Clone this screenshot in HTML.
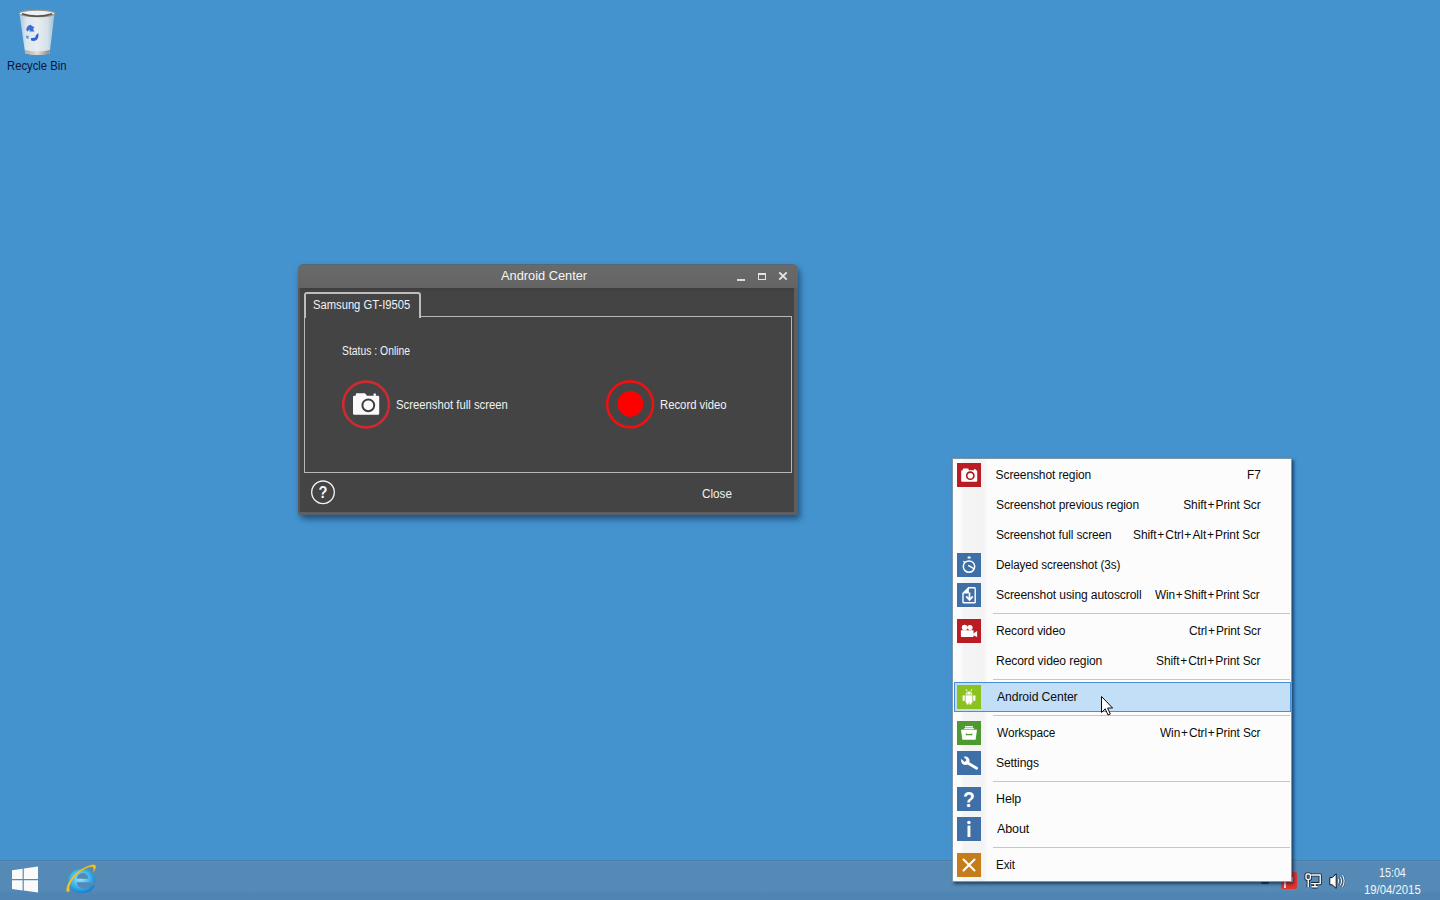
<!DOCTYPE html>
<html><head><meta charset="utf-8">
<style>
*{margin:0;padding:0;box-sizing:border-box}
html,body{width:1440px;height:900px;overflow:hidden}
body{background:#4493cf;font-family:"Liberation Sans",sans-serif;position:relative}
.abs{position:absolute}
.t{position:absolute;white-space:nowrap;line-height:1;transform-origin:0 0}
.mt{position:absolute;white-space:nowrap;line-height:1;transform-origin:0 0;font-size:12px;letter-spacing:-0.11px;color:#0c0c0c}
.pl{margin:0 1.2px 0 0.8px}
</style></head><body>

<!-- recycle bin -->
<svg class="abs" style="left:14px;top:4px" width="48" height="54" viewBox="0 0 48 54">
<defs>
<linearGradient id="rb" x1="0" x2="1"><stop offset="0" stop-color="#a8c6dc"/><stop offset=".2" stop-color="#dbe6ee"/><stop offset=".5" stop-color="#e8eef2"/><stop offset=".8" stop-color="#d4e0e8"/><stop offset="1" stop-color="#9fbdd3"/></linearGradient>
<linearGradient id="rbb" x1="0" x2="1"><stop offset="0" stop-color="#b9a99a"/><stop offset=".5" stop-color="#e6ddd3"/><stop offset="1" stop-color="#8d8277"/></linearGradient>
</defs>
<path d="M5.4 9 L40.6 9 L35.6 49.5 Q23 52 11.2 49.5 Z" fill="url(#rb)"/>
<path d="M11 46 Q23 49 35.8 46 L35.4 49.6 Q23 52.4 11.4 49.6 Z" fill="url(#rbb)"/>
<ellipse cx="23" cy="9.4" rx="17.8" ry="3.2" fill="#eef2f4" stroke="#9c958e" stroke-width="1.1"/>
<path d="M8 9.6 Q23 14 38 9.6" fill="none" stroke="#6f6a66" stroke-width="1.2"/>
<path d="M12.2 25.8 Q12.6 22 16.2 20.8 L20.6 23.4 L19 24.8 L20.4 27.4 L15.4 27.6 L16 26 Q14.2 25.6 13.4 27.8 Z" fill="#3a6fd8"/>
<path d="M16.8 34.2 L21.4 33.4 L21.8 31.2 L24.4 29 Q25 33.6 22.6 36 Q19.8 37.8 17.2 36.6 Z" fill="#2c62d4"/>
<path d="M12 31.6 L14.6 32 L14.4 35 L12.6 34.2 Z" fill="#5a8ad8"/>
<path d="M8 10 Q23 15 38.4 10" fill="none" stroke="#3d3a38" stroke-width="1.2" opacity=".7"/>
</svg>
<div class="t" style="left:7.30px;top:59.64px;font-size:12px;color:#0b1538;transform:scaleX(0.9407);">Recycle Bin</div>

<!-- taskbar -->
<div class="abs" style="left:0;top:860px;width:1440px;height:40px;background:linear-gradient(#5a8dba 0px,#5589b6 4px,#5589b6 30px,#5084b2 34px,#5084b2 40px)"></div>
<div class="abs" style="left:0;top:860px;width:1440px;height:1px;background:#4b7eab"></div>
<!-- start -->
<svg class="abs" style="left:11px;top:866px" width="28" height="28" viewBox="0 0 28 28">
<path d="M1 4.3 L11.6 2.8 V13 H1 Z M12.8 2.6 L27 0.6 V13 H12.8 Z M1 14.2 H11.6 V24.4 L1 22.9 Z M12.8 14.2 H27 V26.6 L12.8 24.6 Z" fill="#fafafa"/>
</svg>
<!-- IE -->
<svg class="abs" style="left:64px;top:862px" width="34" height="34" viewBox="0 0 34 34">
<defs><radialGradient id="ieb" cx=".45" cy=".4" r=".6"><stop offset="0" stop-color="#9fe6ff"/><stop offset=".6" stop-color="#3cb4ea"/><stop offset="1" stop-color="#1c7fc9"/></radialGradient></defs>
<path d="M5.5 19.5 C5.5 12 10.5 7 17 7 C23.5 7 27.5 11.5 27.5 18.5 V20 H12.5 C13 24 15.5 26 18.5 26 C21 26 22.8 24.8 23.6 23 H27.2 C26 27.5 22.5 30.5 17.5 30.5 C10 30.5 5.5 26 5.5 19.5 Z M12.6 16.6 H21.8 C21.5 13.2 19.8 11.2 17.2 11.2 C14.6 11.2 13 13.2 12.6 16.6 Z" fill="url(#ieb)" transform="translate(4,-0.6) scale(1.24,1.04) translate(-5.5,0)"/>
<path d="M3 30 C1 26 6 15 15 9 C23 3.5 30 1.5 31.5 3.5 C32.5 5 31 8 29 10.5 C30 7.5 30 5.5 28.8 5 C26 4 20 7 15 11 C7.5 17 3.8 25 5.8 28.8 C4.8 29.4 3.8 30.2 3 30 Z" fill="#f3c726" stroke="#d9a514" stroke-width=".4"/>
</svg>
<!-- tray hidden icon -->
<div class="abs" style="left:1261px;top:881px;width:8px;height:3px;background:#1d3f66;border-radius:1px"></div>
<!-- tray red icon -->
<div class="abs" style="left:1281px;top:872px;width:16px;height:17px;background:#e2342c;border-radius:2px"></div>
<svg class="abs" style="left:1281px;top:872px" width="16" height="17" viewBox="0 0 16 17"><path d="M4 16 V9 H11 V5" fill="none" stroke="#fff" stroke-width="1.6"/></svg>
<!-- network -->
<svg class="abs" style="left:1303px;top:871px" width="20" height="19" viewBox="0 0 20 19">
<g fill="none" stroke="#10161c" stroke-width="3.2" stroke-linejoin="round" opacity=".85">
<rect x="3" y="3" width="4.4" height="5.4" rx="1.4"/>
<path d="M5.2 8.6 V16.2"/>
<path d="M8.2 4 H17.2 V12.6 H8.2"/>
<path d="M12 12.6 V15.4 M8.6 15.8 H14.6"/>
</g>
<g fill="none" stroke="#ffffff" stroke-width="1.4" stroke-linejoin="round">
<rect x="3" y="3" width="4.4" height="5.4" rx="1.4"/>
<path d="M5.2 8.6 V16.2"/>
<path d="M8.2 4 H17.2 V12.6 H8.2"/>
<path d="M12 12.6 V15.4 M8.6 15.8 H14.6"/>
</g>
</svg>
<!-- volume -->
<svg class="abs" style="left:1327px;top:871px" width="20" height="20" viewBox="0 0 20 20">
<path d="M2.8 6.6 H5.2 L9.2 2.8 V17.4 L5.2 13.8 H2.8 Z" fill="#fff" stroke="#10161c" stroke-width="1" stroke-linejoin="round"/>
<path d="M11.2 8 Q12.4 10 11.2 12 M13.4 6 Q15.6 10 13.4 14 M15.4 4 Q18.8 10 15.4 16" fill="none" stroke="#10161c" stroke-width="2.4" opacity=".5"/>
<path d="M11.2 8 Q12.4 10 11.2 12 M13.4 6 Q15.6 10 13.4 14 M15.4 4 Q18.8 10 15.4 16" fill="none" stroke="#f4f8ff" stroke-width="1.1"/>
</svg>
<div class="t" style="left:1379.40px;top:866.84px;font-size:12px;color:#f4f6f8;transform:scaleX(0.8924);">15:04</div><div class="t" style="left:1363.50px;top:883.74px;font-size:12px;color:#f4f6f8;transform:scaleX(0.9441);">19/04/2015</div>

<!-- dialog -->
<div class="abs" style="left:298px;top:264px;width:500px;height:251px;border-radius:6px 6px 0 5px;box-shadow:2px 4px 6px rgba(15,45,80,.65);background:linear-gradient(90deg,#575757,#5e5e5e 2%,#5e5e5e)"></div>
<div class="abs" style="left:298px;top:512px;width:500px;height:3px;border-radius:0 0 0 5px;background:#5c6066"></div>
<div class="abs" style="left:298px;top:264px;width:500px;height:24px;border-radius:6px 6px 0 0;background:linear-gradient(#6a6a6a,#646464)"></div>
<div class="abs" style="left:300px;top:288px;width:494px;height:224px;background:linear-gradient(#3d3d3d,#434343 3px,#444444 6px)"></div>
<div class="abs" style="left:303px;top:264px;width:490px;height:1px;background:rgba(70,100,130,.55)"></div>
<!-- title buttons -->
<div class="abs" style="left:737px;top:279px;width:8px;height:2px;background:#dadada"></div>
<div class="abs" style="left:758px;top:273px;width:8px;height:7px;border:1px solid #e4e4e4;border-top-width:2px"></div>
<svg class="abs" style="left:778px;top:271px" width="10" height="10" viewBox="0 0 10 10"><path d="M1.3 1.3 L8.7 8.7 M8.7 1.3 L1.3 8.7" stroke="#e4e4e4" stroke-width="1.9"/></svg>
<!-- tab page -->
<div class="abs" style="left:304px;top:316px;width:488px;height:157px;border:1px solid #b8b8b8"></div>
<div class="abs" style="left:304px;top:292px;width:117px;height:26px;border:2px solid #bdbdbd;border-bottom:none;border-radius:3px 3px 0 0;background:#444"></div>
<div class="t" style="left:501.40px;top:268.60px;font-size:13px;color:#f6f6f6;transform:scaleX(0.9847);">Android Center</div>
<div class="t" style="left:313.40px;top:298.59px;font-size:12px;color:#f2f2f2;transform:scaleX(0.9341);">Samsung GT-I9505</div>
<div class="t" style="left:341.80px;top:344.84px;font-size:12px;color:#f2f2f2;transform:scaleX(0.8652);">Status : Online</div>
<div class="t" style="left:395.60px;top:398.84px;font-size:12px;color:#f2f2f2;transform:scaleX(0.9416);">Screenshot full screen</div>
<div class="t" style="left:660.10px;top:398.84px;font-size:12px;color:#f2f2f2;transform:scaleX(0.9419);">Record video</div>
<div class="t" style="left:701.60px;top:487.84px;font-size:12px;color:#f2f2f2;transform:scaleX(0.9746);">Close</div>
<!-- camera -->
<svg class="abs" style="left:340px;top:380px" width="52" height="50" viewBox="0 0 52 50">
<circle cx="26.1" cy="24.5" r="22.9" fill="none" stroke="#d02a30" stroke-width="2.6"/>
<path d="M13 17 Q13 15.8 14.2 15.8 H15.6 L16.2 13.3 H25 L27 15.8 H33.6 V13.6 H35.8 V15.8 H38 Q39.2 15.8 39.2 17 V33.5 Q39.2 34.7 38 34.7 H14.2 Q13 34.7 13 33.5 Z" fill="#fafafa"/>
<circle cx="28.3" cy="25.3" r="5.9" fill="none" stroke="#3e3e3e" stroke-width="2"/>
</svg>
<!-- record -->
<svg class="abs" style="left:604px;top:380px" width="52" height="50" viewBox="0 0 52 50">
<circle cx="26.1" cy="24.3" r="22.9" fill="none" stroke="#f01010" stroke-width="2.6"/>
<circle cx="26.3" cy="23.9" r="13" fill="#ff0000"/>
</svg>
<!-- help -->
<svg class="abs" style="left:310px;top:479px" width="26" height="26" viewBox="0 0 26 26">
<circle cx="13" cy="13.3" r="11.3" fill="none" stroke="#f2f2f2" stroke-width="1.3"/>
<text x="13" y="19.3" text-anchor="middle" font-family="Liberation Sans" font-weight="bold" font-size="17" fill="#f4f4f4" transform="translate(13,0) scale(.86,1) translate(-13,0)">?</text>
</svg>

<!-- context menu -->
<div class="abs" style="left:952px;top:458px;width:340px;height:424px;background:#fcfcfc;border:1px solid #7f97ab;box-shadow:2px 2px 3px rgba(0,20,50,.6)"></div>
<div class="abs" style="left:953px;top:459px;width:36px;height:422px;background:linear-gradient(90deg,#fdfdfd 0px,#fcfcfc 7px,#f4f4f4 11px,#f3f3f3 30px,#f6f6f6 32px,#fdfdfd 35px)"></div>
<svg class="abs" style="left:957px;top:463px" width="24" height="24" viewBox="0 0 24 24"><rect width="24" height="24" fill="#b91c23"/><path d="M4.2 8.2 Q4.2 7.2 5.2 7.2 H5.6 L6.2 5.4 H11.2 L12 7.2 H17.2 V6 H18.6 V7.2 H19.2 Q20.2 7.2 20.2 8.2 V17.8 Q20.2 18.8 19.2 18.8 H5.2 Q4.2 18.8 4.2 17.8 Z" fill="#fff"/><circle cx="13.3" cy="12.7" r="3.6" fill="none" stroke="#a8141b" stroke-width="1.6"/></svg>
<div class="mt" style="left:995.60px;top:468.84px;transform:scaleX(1.0000)">Screenshot region</div>
<div class="mt" style="left:1247.31px;top:468.84px;transform:scaleX(0.9917)">F7</div>
<div class="mt" style="left:995.60px;top:498.84px;transform:scaleX(0.9979)">Screenshot previous region</div>
<div class="mt" style="left:1183.20px;top:498.84px;transform:scaleX(1.0000)">Shift<span class="pl">+</span>Print Scr</div>
<div class="mt" style="left:995.61px;top:528.84px;transform:scaleX(0.9939)">Screenshot full screen</div>
<div class="mt" style="left:1133.30px;top:528.84px;transform:scaleX(0.9992)">Shift<span class="pl">+</span>Ctrl<span class="pl">+</span>Alt<span class="pl">+</span>Print Scr</div>
<svg class="abs" style="left:957px;top:553px" width="24" height="24" viewBox="0 0 24 24"><rect width="24" height="24" fill="#3f6fa7"/><circle cx="12" cy="13.6" r="5.7" fill="none" stroke="#fff" stroke-width="1.5"/><rect x="10.6" y="3.5" width="3" height="2" rx=".6" fill="#fff"/><path d="M6.4 8.2 L8 9.6" stroke="#fff" stroke-width="1.5"/><path d="M11.7 12.6 L16.8 15.6" stroke="#fff" stroke-width="1.4" stroke-linecap="round"/></svg>
<div class="mt" style="left:995.63px;top:558.84px;transform:scaleX(0.9738)">Delayed screenshot (3s)</div>
<svg class="abs" style="left:957px;top:583px" width="24" height="24" viewBox="0 0 24 24"><rect width="24" height="24" fill="#3f6fa7"/><path d="M11.6 4.8 H17.4 Q18.2 4.8 18.2 5.6 V19 Q18.2 19.8 17.4 19.8 H6.8 Q6 19.8 6 19 V10.2 Z" fill="none" stroke="#fff" stroke-width="1.4" stroke-linejoin="round"/><path d="M5.6 10.4 L11.9 4.1 V10.4 Z" fill="#fff"/><path d="M12.5 9.6 V16.8 M9.2 13.4 L12.5 16.9 L15.8 13.4" fill="none" stroke="#fff" stroke-width="1.7"/></svg>
<div class="mt" style="left:995.59px;top:588.84px;transform:scaleX(1.0070)">Screenshot using autoscroll</div>
<div class="mt" style="left:1155.20px;top:588.84px;transform:scaleX(0.9813)">Win<span class="pl">+</span>Shift<span class="pl">+</span>Print Scr</div>
<div class="abs" style="left:993px;top:613px;width:297px;height:1px;background:#c6c6c6"></div>
<svg class="abs" style="left:957px;top:619px" width="24" height="24" viewBox="0 0 24 24"><rect width="24" height="24" fill="#b91c23"/><circle cx="7.6" cy="8.6" r="2.8" fill="#fff"/><circle cx="12.9" cy="8.6" r="2.7" fill="#fff"/><rect x="3.9" y="11.2" width="12.6" height="6.8" rx=".4" fill="#fff"/><path d="M16.2 14.6 L20.1 12 V18 L16.2 16.2 Z" fill="#fff"/><path d="M10.3 11.3 L11.1 10 L11.9 11.3 Z" fill="#b91c23"/></svg>
<div class="mt" style="left:995.60px;top:624.84px;transform:scaleX(0.9985)">Record video</div>
<div class="mt" style="left:1188.50px;top:624.84px;transform:scaleX(0.9958)">Ctrl<span class="pl">+</span>Print Scr</div>
<div class="mt" style="left:995.59px;top:654.84px;transform:scaleX(1.0087)">Record video region</div>
<div class="mt" style="left:1156.40px;top:654.84px;transform:scaleX(0.9981)">Shift<span class="pl">+</span>Ctrl<span class="pl">+</span>Print Scr</div>
<div class="abs" style="left:993px;top:679px;width:297px;height:1px;background:#c6c6c6"></div>
<div class="abs" style="left:954px;top:682px;width:337px;height:30px;background:#c3dff8;border:1px solid #4a8fd6"></div>
<svg class="abs" style="left:957px;top:685px" width="24" height="24" viewBox="0 0 24 24"><rect width="24" height="24" fill="#8cc220"/><path d="M8.6 9.6 Q8.8 6.6 12 6.4 Q15.2 6.6 15.4 9.6 Z" fill="#fff"/><path d="M9 4.2 L10.2 6.3 M15 4.2 L13.8 6.3" stroke="#fff" stroke-width=".9"/><circle cx="10.5" cy="8.1" r=".6" fill="#8cc220"/><circle cx="13.5" cy="8.1" r=".6" fill="#8cc220"/><rect x="8.6" y="10.3" width="6.8" height="7.3" fill="#fff"/><rect x="5.6" y="10.3" width="2.2" height="5.8" rx="1" fill="#fff"/><rect x="16.2" y="10.3" width="2.2" height="5.8" rx="1" fill="#fff"/><rect x="9.6" y="16" width="2" height="3.6" rx=".9" fill="#fff"/><rect x="12.4" y="16" width="2" height="3.6" rx=".9" fill="#fff"/></svg>
<div class="mt" style="left:996.60px;top:690.84px;transform:scaleX(1.0177)">Android Center</div>
<div class="abs" style="left:993px;top:715px;width:297px;height:1px;background:#c6c6c6"></div>
<svg class="abs" style="left:957px;top:721px" width="24" height="24" viewBox="0 0 24 24"><rect width="24" height="24" fill="#4f9a30"/><rect x="8" y="5" width="8" height="1.6" fill="#e8f4e4"/><path d="M6.7 8.2 Q7 7 8 7 H16 Q17 7 17.3 8.2 Z" fill="#eef6ea"/><path d="M4 8.8 H20 L18.6 18.8 H5.4 Z" fill="#fff"/><path d="M9.4 12.4 V13.6 H14.6 V12.4" fill="none" stroke="#4f9a30" stroke-width="1.3"/></svg>
<div class="mt" style="left:996.60px;top:726.84px;transform:scaleX(0.9897)">Workspace</div>
<div class="mt" style="left:1160.20px;top:726.84px;transform:scaleX(0.9901)">Win<span class="pl">+</span>Ctrl<span class="pl">+</span>Print Scr</div>
<svg class="abs" style="left:957px;top:751px" width="24" height="24" viewBox="0 0 24 24"><rect width="24" height="24" fill="#3f6fa7"/><circle cx="8.3" cy="9.8" r="4.2" fill="#fff"/><path d="M9.6 11.2 L19.6 17.2" stroke="#fff" stroke-width="2.8" stroke-linecap="round"/><path d="M9.7 9.0 L7.6 11.1 L3.2 6.7 L5.3 4.6 Z" fill="#3f6fa7"/></svg>
<div class="mt" style="left:995.59px;top:756.84px;transform:scaleX(1.0098)">Settings</div>
<div class="abs" style="left:993px;top:781px;width:297px;height:1px;background:#c6c6c6"></div>
<svg class="abs" style="left:957px;top:787px" width="24" height="24" viewBox="0 0 24 24"><rect width="24" height="24" fill="#3f6fa7"/><text x="12" y="20.2" text-anchor="middle" font-family="Liberation Sans" font-weight="bold" font-size="22.5" fill="#fff" transform="translate(12,0) scale(.86,1) translate(-12,0)">?</text></svg>
<div class="mt" style="left:995.56px;top:792.84px;transform:scaleX(1.0391)">Help</div>
<svg class="abs" style="left:957px;top:817px" width="24" height="24" viewBox="0 0 24 24"><rect width="24" height="24" fill="#3f6fa7"/><circle cx="11.9" cy="5.6" r="1.75" fill="#fff"/><rect x="10.5" y="8.6" width="2.9" height="11.4" fill="#fff"/></svg>
<div class="mt" style="left:996.60px;top:822.84px;transform:scaleX(1.0452)">About</div>
<div class="abs" style="left:993px;top:847px;width:297px;height:1px;background:#c6c6c6"></div>
<svg class="abs" style="left:957px;top:853px" width="24" height="24" viewBox="0 0 24 24"><rect width="24" height="24" fill="#c57d1c"/><path d="M6.5 6.5 L17.5 17.5 M17.5 6.5 L6.5 17.5" stroke="#fff" stroke-width="2" stroke-linecap="round"/></svg>
<div class="mt" style="left:995.63px;top:858.84px;transform:scaleX(0.9667)">Exit</div>

<!-- cursor -->
<svg class="abs" style="left:1100px;top:695px" width="16" height="22" viewBox="0 0 16 22">
<path d="M1.5 1.5 V17.5 L5.2 13.8 L8 20 L10.3 19 L7.6 13 H12.6 Z" fill="#fff" stroke="#0a0a0a" stroke-width="1" stroke-linejoin="miter"/>
</svg>
</body></html>
